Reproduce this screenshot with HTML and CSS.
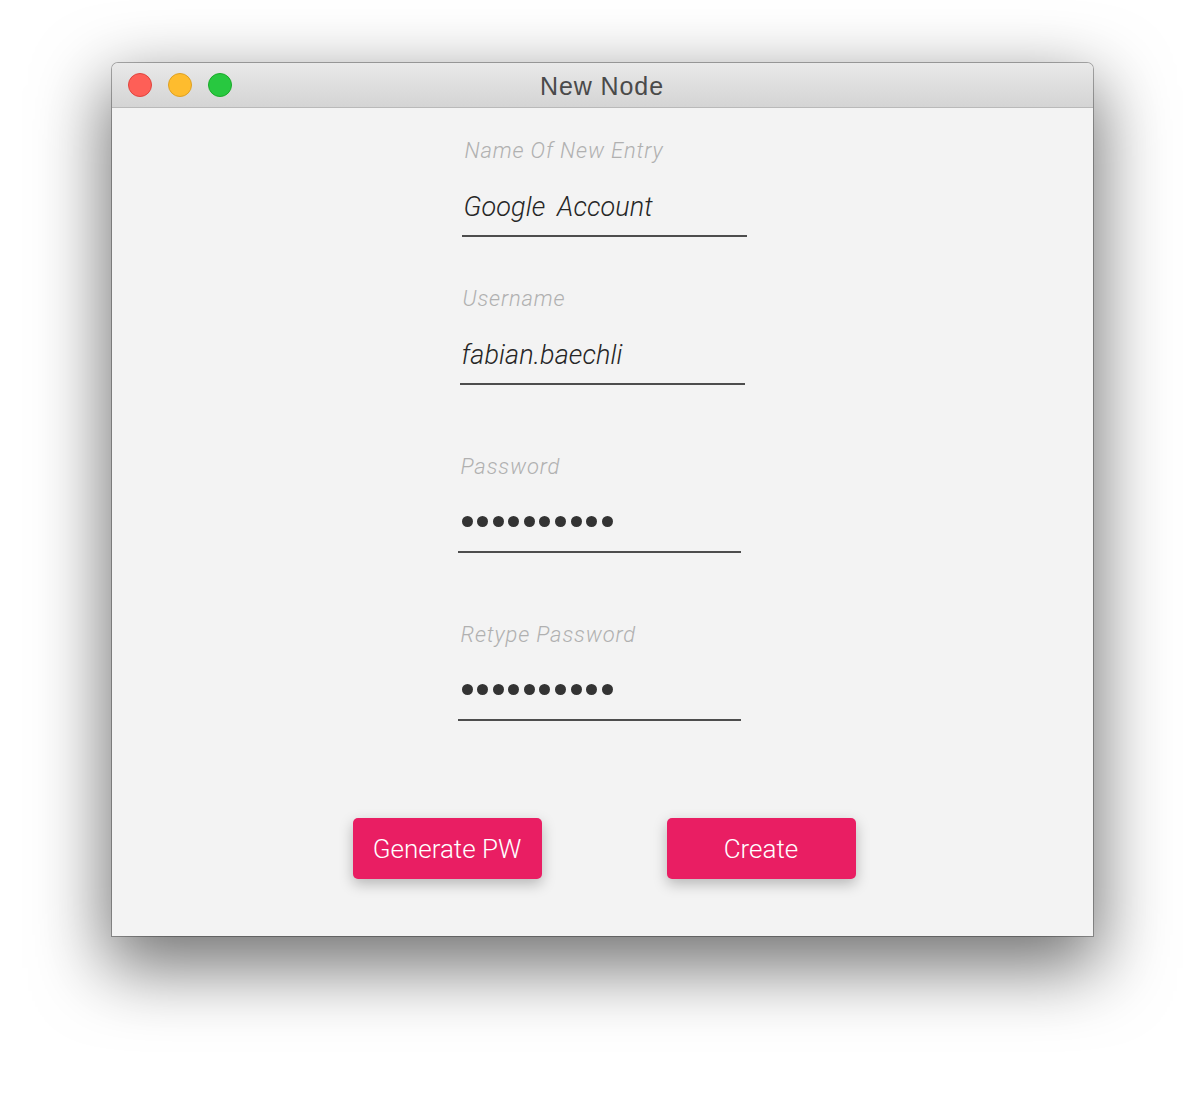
FILE: index.html
```html
<!DOCTYPE html>
<html>
<head>
<meta charset="utf-8">
<title>New Node</title>
<link rel="stylesheet" href="styles.css">
</head>
<body>
<div class="stage">
  <div class="window">
    <div class="titlebar">
      <div class="lights">
        <span class="light light-close"></span>
        <span class="light light-min"></span>
        <span class="light light-max"></span>
      </div>
      <div class="title">New Node</div>
    </div>
    <div class="content">
      <div class="field field-1">
        <div class="label">Name Of New Entry</div>
        <div class="value">Google Account</div>
      </div>
      <div class="field field-2">
        <div class="label">Username</div>
        <div class="value">fabian.baechli</div>
      </div>
      <div class="field field-3">
        <div class="label">Password</div>
        <div class="dots"><span></span><span></span><span></span><span></span><span></span><span></span><span></span><span></span><span></span><span></span></div>
      </div>
      <div class="field field-4">
        <div class="label">Retype Password</div>
        <div class="dots"><span></span><span></span><span></span><span></span><span></span><span></span><span></span><span></span><span></span><span></span></div>
      </div>
      <div class="buttons">
        <button class="btn">Generate PW</button>
        <button class="btn">Create</button>
      </div>
    </div>
  </div>
</div>
</body>
</html>
```

FILE: styles.css
```css
html, body {
  margin: 0;
  padding: 0;
  background: #ffffff;
}

.stage {
  width: 1204px;
  height: 1096px;
  padding-top: 63px;
  box-sizing: border-box;
  display: flex;
  justify-content: center;
  align-items: flex-start;
}

.window {
  width: 981px;
  height: 873px;
  border-radius: 6px 6px 0 0;
  background: #f3f3f3;
  box-shadow: 0 26px 70px 6px rgba(0, 0, 0, 0.55), 0 0 0 1px rgba(0, 0, 0, 0.3);
  display: flex;
  flex-direction: column;
  overflow: hidden;
}

.titlebar {
  height: 44px;
  flex: none;
  background: linear-gradient(#e9e9e9, #d4d4d4);
  border-bottom: 1px solid #b9b9b9;
  display: flex;
  align-items: center;
  position: relative;
}

.lights {
  display: flex;
  gap: 16px;
  padding-left: 16px;
}

.light {
  width: 24px;
  height: 24px;
  border-radius: 50%;
  box-sizing: border-box;
}

.light-close { background: #fe5f57; border: 1px solid #e0443e; }
.light-min { background: #febc2e; border: 1px solid #dea123; }
.light-max { background: #28c840; border: 1px solid #1aab29; }

.title {
  position: absolute;
  left: 0;
  right: 0;
  text-align: center;
  font-family: "Liberation Sans", Arial, sans-serif;
  font-size: 25px;
  letter-spacing: 0.9px;
  color: #4a4a4a;
  top: 9px;
}

.content {
  flex: 1;
  display: flex;
  flex-direction: column;
  align-items: center;
  padding-top: 30px;
  padding-left: 2px;
}

.field {
  width: 285px;
  border-bottom: 2px solid #4d4d4d;
  padding-bottom: 12px;
  box-sizing: border-box;
}

.field-1 { margin-left: 2px; }
.field-2 { margin-top: 49px; margin-right: 2px; }
.field-3 { margin-top: 69px; width: 283px; margin-right: 8px; }
.field-4 { margin-top: 69px; width: 283px; margin-right: 8px; }

.label {
  font-family: Roboto, "Liberation Sans", sans-serif;
  font-style: italic;
  font-weight: 300;
  font-size: 22px;
  line-height: 26px;
  color: #b0b0b0;
  padding-left: 3px;
  letter-spacing: 0.85px;
}

.value {
  margin-top: 27px;
  font-family: Roboto, "Liberation Sans", sans-serif;
  font-style: italic;
  font-weight: 300;
  font-size: 27px;
  line-height: 32px;
  color: #262626;
  padding-left: 2px;
  letter-spacing: 0.1px;
  word-spacing: 5px;
}

.dots {
  margin-top: 27px;
  height: 32px;
  box-sizing: border-box;
  padding-bottom: 4px;
  display: flex;
  align-items: center;
  gap: 4.6px;
  padding-left: 4px;
}

.dots span {
  width: 11px;
  height: 11px;
  flex: none;
  border-radius: 50%;
  background: #333333;
}

.buttons {
  margin-top: 97px;
  display: flex;
  gap: 125px;
  margin-left: 2px;
}

.btn {
  width: 189px;
  height: 61px;
  border: none;
  border-radius: 5px;
  background: #e91e63;
  color: #ffffff;
  font-family: Roboto, "Liberation Sans", sans-serif;
  font-weight: 300;
  font-size: 26px;
  box-shadow: 0 5px 14px rgba(0, 0, 0, 0.25);
  padding: 0;
}
```
